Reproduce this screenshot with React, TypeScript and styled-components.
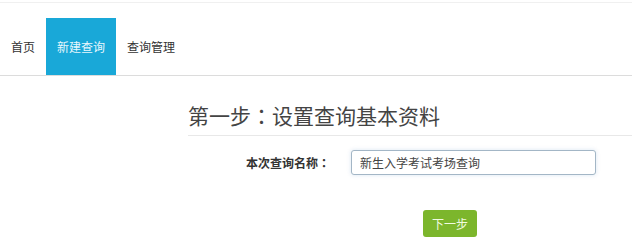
import React from "react"
import styled, { createGlobalStyle } from "styled-components"

const GlobalStyle = createGlobalStyle`
  html, body {
    margin: 0;
    padding: 0;
    background: #fff;
    font-family: "Liberation Sans", "Noto Sans CJK SC", sans-serif;
    color: #333;
  }
`

const Page = styled.div`
  width: 632px;
  height: 248px;
  overflow: hidden;
  border-top: 1px solid #f0f0f0;
  margin-top: 2px;
  box-sizing: border-box;
`

const Nav = styled.div`
  display: flex;
  padding-top: 15px;
  border-bottom: 1px solid #dcdcdc;
`

const NavItem = styled.div<{ $active?: boolean }>`
  height: 57px;
  padding: 0 11px;
  display: flex;
  align-items: center;
  font-size: 12px;
  color: ${(p) => (p.$active ? "#e8f7fd" : "#333")};
  background: ${(p) => (p.$active ? "#19a8d8" : "transparent")};
`

const Main = styled.div`
  padding-left: 188px;
`

const Title = styled.h2`
  margin: 24px 0 0;
  padding: 0 0 3px 0;
  font-size: 21px;
  font-weight: normal;
  line-height: 30px;
  color: #444;
  border-bottom: 1px solid #e8e8e8;
`

// centred full-width colon, as in the reference
const Colon = styled.span`
  font-family: "Noto Sans CJK TC", sans-serif;
`

const FormRow = styled.div`
  display: grid;
  grid-template-columns: 163px 245px;
  align-items: center;
  margin-top: 14px;
`

const Label = styled.label`
  text-align: right;
  padding-right: 21px;
  font-size: 12px;
  font-weight: bold;
  color: #333;
`

const Input = styled.input`
  box-sizing: border-box;
  width: 245px;
  height: 25px;
  padding: 0 8px;
  border: 1px solid #a3b6c6;
  border-radius: 3px;
  box-shadow: 0 0 4px rgba(130, 170, 210, 0.3);
  font-family: "Liberation Sans", "Noto Sans CJK SC", sans-serif;
  font-size: 12px;
  color: #444;
  outline: none;
`

const ButtonRow = styled.div`
  padding-left: 235px;
  margin-top: 35px;
`

const NextButton = styled.button`
  width: 54px;
  height: 27px;
  border: none;
  border-radius: 3px;
  background: #7cb62c;
  color: #f0fbe0;
  font-family: "Liberation Sans", "Noto Sans CJK SC", sans-serif;
  font-size: 12px;
  padding: 0;
`

const App: React.FC = () => {
  return (
    <Page>
      <GlobalStyle />
      <Nav>
        <NavItem>首页</NavItem>
        <NavItem $active>新建查询</NavItem>
        <NavItem>查询管理</NavItem>
      </Nav>
      <Main>
        <Title>
          第一步<Colon>：</Colon>设置查询基本资料
        </Title>
        <FormRow>
          <Label>
            本次查询名称<Colon>：</Colon>
          </Label>
          <Input defaultValue="新生入学考试考场查询" />
        </FormRow>
        <ButtonRow>
          <NextButton>下一步</NextButton>
        </ButtonRow>
      </Main>
    </Page>
  )
}

export default App
